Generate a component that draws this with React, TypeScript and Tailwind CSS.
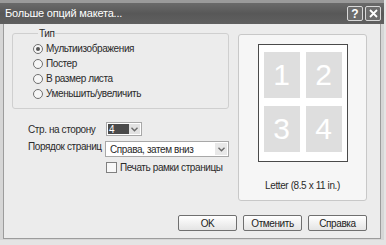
import React from "react";

const font = { fontFamily: '"Liberation Sans", Arial, sans-serif' };

function Chevron() {
  return (
    <svg width="7" height="5" viewBox="0 0 7 5">
      <path d="M0.5 0.8 L3.5 3.8 L6.5 0.8" fill="none" stroke="#6a6a6a" strokeWidth="1.4" />
    </svg>
  );
}

function Radio({ label, checked }: { label: string; checked?: boolean }) {
  return (
    <div className="flex h-[15px] items-center gap-[3px]">
      <span className="flex h-[10px] w-[10px] items-center justify-center rounded-full border border-[#707070] bg-[#f6f6f6]">
        {checked && <span className="h-[4px] w-[4px] rounded-full bg-[#555]" />}
      </span>
      <span>{label}</span>
    </div>
  );
}

function Btn({ children }: { children: React.ReactNode }) {
  return (
    <button className="flex h-[16px] w-[59px] items-center justify-center rounded-[2px] border border-[#6f6f6f] bg-gradient-to-b from-[#ffffff] to-[#e4e4e4] text-[10px] tracking-[-0.4px] text-[#222]">
      {children}
    </button>
  );
}

export default function App() {
  return (
    <div
      className="h-[245px] w-[386px] whitespace-nowrap bg-[#e4e4e4] text-[10px] tracking-[-0.4px] text-[#2a2a2a]"
      style={font}
    >
      <div className="flex h-[240px] w-[384px] flex-col bg-[#d6d6d6]">
        {/* title bar */}
        <div className="flex h-[24px] items-center border-t-[3px] border-[#9a9a9a] bg-gradient-to-b from-[#6a6a6a] via-[#585858] to-[#606060] pl-[5px] pr-[3px]">
          <span className="flex-1 text-[11px] tracking-[-0.2px] text-white">Больше опций макета...</span>
          <div className="flex gap-[2px]">
            <span className="flex h-[15px] w-[16px] items-center justify-center rounded-[2px] border border-[#d8d8d8] bg-[#6c6c6c] text-[12px] font-bold tracking-normal text-white">
              ?
            </span>
            <span className="flex h-[15px] w-[16px] items-center justify-center rounded-[2px] border border-[#d8d8d8] bg-[#6c6c6c]">
              <svg width="9" height="9" viewBox="0 0 9 9">
                <path d="M1 1 L8 8 M8 1 L1 8" stroke="#fff" strokeWidth="1.8" />
              </svg>
            </span>
          </div>
        </div>

        {/* body */}
        <div className="mx-[3px] mb-[1px] flex flex-1 flex-col border-x border-b border-[#9c9c9c] bg-[#ececec] pl-[8px] pr-[13px] pt-[3px]">
          <div className="flex gap-[9px]">
            <div className="w-[217px]">
              <fieldset className="h-[82px] rounded-[3px] border border-[#cfcfcf] pl-[20px]">
                <legend className="ml-[5px] px-[1px] leading-[13px]">Тип</legend>
                <div className="pt-[1px]">
                  <Radio label="Мультиизображения" checked />
                  <Radio label="Постер" />
                  <Radio label="В размер листа" />
                  <Radio label="Уменьшить/увеличить" />
                </div>
              </fieldset>

              <div className="pl-[16px]">
                <div className="mt-[13px] flex h-[14px] items-center">
                  <span className="w-[78px]">Стр. на сторону</span>
                  <div className="flex h-[14px] w-[36px] items-center border border-[#a8a8a8] bg-white p-[1px]">
                    <span className="flex h-full w-[21px] items-center bg-[#4a4a4a] pl-[1px] text-white">4</span>
                    <span className="ml-auto flex h-full w-[11px] items-center justify-center bg-[#e2e2e2]">
                      <Chevron />
                    </span>
                  </div>
                </div>
                <div className="mt-[5px] flex h-[16px] items-start">
                  <span className="w-[77px] leading-[11px]">Порядок страниц</span>
                  <div className="flex h-[16px] w-[124px] items-center border border-[#a8a8a8] bg-white pl-[4px] pr-[1px]">
                    <span className="flex-1">Справа, затем вниз</span>
                    <span className="flex h-[12px] w-[12px] items-center justify-center bg-[#e8e8e8]">
                      <Chevron />
                    </span>
                  </div>
                </div>
                <div className="mt-[5px] flex h-[11px] items-center gap-[3px] pl-[78px]">
                  <span className="h-[11px] w-[11px] border border-[#808080] bg-[#f8f8f8]" />
                  <span>Печать рамки страницы</span>
                </div>
              </div>
            </div>

            {/* preview */}
            <div className="mt-[7px] flex h-[167px] w-[130px] flex-col items-center rounded-[3px] border border-[#c8c8c8] bg-[#f6f6f6] pt-[9px]">
              <div className="grid h-[118px] w-[90px] grid-cols-2 gap-x-[6px] gap-y-[8px] border border-[#4a4a4a] bg-white px-[5px] pb-[9px] pt-[7px]">
                {["1", "2", "3", "4"].map((n) => (
                  <div
                    key={n}
                    className="flex h-[46px] w-[36px] items-center justify-center bg-[#dedede] text-[30px] leading-none tracking-normal text-white"
                  >
                    {n}
                  </div>
                ))}
              </div>
              <div className="mt-[16px] text-[10px]">Letter (8.5 x 11 in.)</div>
            </div>
          </div>

          <div className="mt-[14px] flex justify-end gap-[6px]">
            <Btn>OK</Btn>
            <Btn>Отменить</Btn>
            <Btn>Справка</Btn>
          </div>
        </div>
      </div>
    </div>
  );
}
